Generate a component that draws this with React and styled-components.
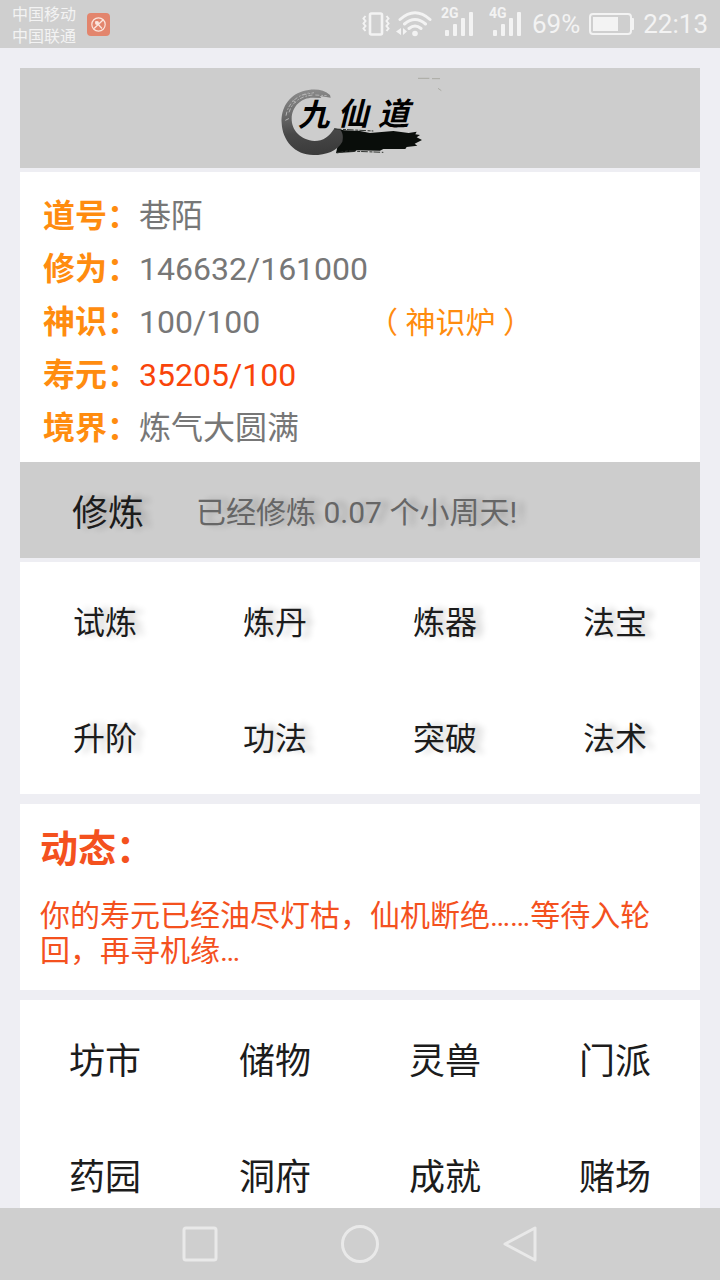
import React from 'react';
import styled, {createGlobalStyle} from 'styled-components';

const perfil = [
    {label: '道号', value: '巷陌'},
    {label: '修为', value: '146632/161000'},
    {label: '神识', value: '100/100', link: '（ 神识炉 ）'},
    {label: '寿元', value: '35205/100', alert: true},
    {label: '境界', value: '炼气大圆满'},
];

const acoes = ['试炼', '炼丹', '炼器', '法宝', '升阶', '功法', '突破', '法术'];
const lugares = ['坊市', '储物', '灵兽', '门派', '药园', '洞府', '成就', '赌场'];

const Signal = ({label}) => (
    <svg width={'34'} height={'32'} viewBox={'0 0 34 32'} fill={'#f3f3f3'}>
        <text x={'0'} y={'14'} fontSize={'14'} fontWeight={'700'}>{label}</text>
        <rect x={'4'} y={'26'} width={'4'} height={'6'} rx={'1'}/>
        <rect x={'12'} y={'20'} width={'4'} height={'12'} rx={'1'}/>
        <rect x={'20'} y={'14'} width={'4'} height={'18'} rx={'1'}/>
        <rect x={'28'} y={'8'} width={'4'} height={'24'} rx={'1'}/>
    </svg>
);

const Vibrate = () => (
    <svg width={'28'} height={'24'} viewBox={'0 0 28 24'} fill={'none'} stroke={'#f3f3f3'}>
        <rect x={'8'} y={'1.500'} width={'12'} height={'21'} rx={'1.500'} strokeWidth={'2.600'}/>
        <path d={'M3.500 4l-2 2.500 2 2.500-2 2.500 2 2.500-2 2.500 2 2.500M24.500 4l2 2.500-2 2.500 2 2.500-2 2.500 2 2.500-2 2.500'} strokeWidth={'2'}/>
    </svg>
);

const Wifi = () => (
    <svg width={'36'} height={'26'} viewBox={'0 0 36 26'} fill={'none'} stroke={'#f3f3f3'} strokeWidth={'3'} strokeLinecap={'round'}>
        <path d={'M4 8.500Q19-5 34 8.500M8.500 13Q19 4 29.500 13M13 17.500Q19 12.500 25 17.500'}/>
        <circle cx={'19'} cy={'22.500'} r={'2.800'} fill={'#f3f3f3'} stroke={'none'}/>
        <path d={'M5 17v7l-5-3.500zM7 17v7l4-3.500z'} fill={'#f3f3f3'} stroke={'none'}/>
    </svg>
);

const Battery = () => (
    <svg width={'45'} height={'22'} viewBox={'0 0 45 22'} fill={'none'}>
        <rect x={'1'} y={'1'} width={'41'} height={'20'} rx={'3'} stroke={'#f3f3f3'} strokeWidth={'2'}/>
        <rect x={'4'} y={'4'} width={'25'} height={'14'} fill={'#f3f3f3'}/>
        <rect x={'42'} y={'5'} width={'3'} height={'12'} rx={'1'} fill={'#f3f3f3'}/>
    </svg>
);

const AppIcon = () => (
    <svg width={'23'} height={'23'} viewBox={'0 0 23 23'} fill={'none'}>
        <rect width={'23'} height={'23'} rx={'4'} fill={'#e3856d'}/>
        <circle cx={'11.500'} cy={'11.500'} r={'6.700'} stroke={'#fbe6de'} strokeWidth={'1.200'}/>
        <path d={'M8.500 8.500l6.500 7M16 7L7 15.500'} stroke={'#fbe6de'} strokeWidth={'1.300'}/>
        <circle cx={'10'} cy={'10'} r={'2'} fill={'#fbe6de'}/>
    </svg>
);

const Logo = () => (
    <svg width={'200'} height={'100'} viewBox={'0 9 600 300'}>
        <defs>
            <linearGradient id={'ink'} x1={'0.4'} y1={'0'} x2={'0.5'} y2={'1'}>
                <stop offset={'0'} stopColor={'#8b8b8b'}/>
                <stop offset={'0.35'} stopColor={'#6b6b6b'}/>
                <stop offset={'0.65'} stopColor={'#484848'}/>
                <stop offset={'1'} stopColor={'#3a3a3a'}/>
            </linearGradient>
        </defs>
        <path d={'M222 190L252 196L300 198L330 204L400 198L446 204L470 200L466 208L480 210L470 217L486 225L464 236L472 242L440 246L436 252L370 252L360 257L290 256L282 261L228 264L236 230Z'} fill={'#090d0a'}/>
        <path d={'M210 90C190 72 160 70 128 79C85 92 62 132 65 174C67 226 104 270 160 270C199 270 232 258 247 230C251 214 248 200 238 192L222 192C208 214 190 228 164 228C122 226 94 196 95 160C96 122 126 97 160 98L184 99L180 93L212 98Z'} fill={'url(#ink)'}/>
        <path d={'M78 152C84 116 108 92 146 84M87 142C96 112 120 94 158 90M76 166l16-8M98 106l14 10M128 90l34-7M166 90l34 2'} fill={'none'} stroke={'#b4b4b4'} strokeWidth={'3'} strokeDasharray={'12 6 5 4'}/>
        <path d={'M224 192L340 198M230 264L262 258L370 262'} fill={'none'} stroke={'#303330'} strokeWidth={'3'} strokeDasharray={'20 5 9 3'}/>
        <path d={'M474 40H508M516 41H540M534 70L544 77'} stroke={'#99998e'} strokeWidth={'2'}/>
        <LogoText>
            <tspan x={'114'} y={'184'}>九</tspan>
            <tspan x={'232'} y={'180'}>仙</tspan>
            <tspan x={'354'} y={'180'}>道</tspan>
        </LogoText>
    </svg>
);

const App = () => (
    <Page>
        <GlobalStyle/>
        <StatusBar>
            <Carriers>
                <div>中国移动</div>
                <div>中国联通</div>
            </Carriers>
            <AppIcon/>
            <StatusRight>
                <Connections>
                    <Vibrate/>
                    <Wifi/>
                </Connections>
                <Signals>
                    <Signal label={'2G'}/>
                    <Signal label={'4G'}/>
                </Signals>
                <span>69%</span>
                <Battery/>
                <span>22:13</span>
            </StatusRight>
        </StatusBar>

        <Content>
            <Banner><Logo/></Banner>

            <Profile>
                {perfil.map(p => (
                    <ProfileRow key={p.label}>
                        <dt>{p.label}：</dt>
                        <ProfileValue $alert={p.alert}>{p.value}</ProfileValue>
                        {p.link && <dd><FurnaceLink href={'#shenshilu'}>{p.link}</FurnaceLink></dd>}
                    </ProfileRow>
                ))}
            </Profile>

            <Training>
                <TrainButton type={'button'}>修炼</TrainButton>
                <TrainStatus>已经修炼 0.07 个小周天!</TrainStatus>
            </Training>

            <Menu>
                {acoes.map(a => <MenuButton key={a} type={'button'} $shadow>{a}</MenuButton>)}
            </Menu>

            <News>
                <NewsTitle>动态：</NewsTitle>
                <NewsText>你的寿元已经油尽灯枯，仙机断绝……等待入轮回，再寻机缘…</NewsText>
            </News>

            <Menu>
                {lugares.map(l => <MenuButton key={l} type={'button'} $large>{l}</MenuButton>)}
            </Menu>
        </Content>

        <NavBar>
            <NavButton type={'button'} aria-label={'最近任务'}>
                <svg width={'40'} height={'40'} viewBox={'0 0 40 40'}><rect x={'4'} y={'4'} width={'32'} height={'32'} rx={'2'}/></svg>
            </NavButton>
            <NavButton type={'button'} aria-label={'主页'}>
                <svg width={'40'} height={'40'} viewBox={'0 0 40 40'}><circle cx={'20'} cy={'20'} r={'17.500'}/></svg>
            </NavButton>
            <NavButton type={'button'} aria-label={'返回'}>
                <svg width={'40'} height={'40'} viewBox={'0 0 40 40'}><path d={'M35 4v32L5 20z'}/></svg>
            </NavButton>
        </NavBar>
    </Page>
);

export default App;


const GlobalStyle = createGlobalStyle`
* {
    box-sizing: border-box;
}
body {
    margin: 0;
    background: #eeeef3;
    font-family: Roboto, "Noto Sans CJK SC", sans-serif;
}
button {
    border: 0;
    padding: 0;
    background: none;
    font-family: inherit;
    cursor: pointer;
}
svg {
    display: block;
    flex: none;
}
`;

const Page = styled.div`
display: flex;
flex-direction: column;
height: 100vh;
`;

const StatusBar = styled.header`
display: flex;
align-items: center;
flex: none;
height: 48px;
padding: 0 12px;
background: #cfcfcf;
color: #f3f3f3;
`;

const Carriers = styled.div`
margin-right: 11px;
padding-top: 4px;
font-size: 16px;
line-height: 22px;
`;

const StatusRight = styled.div`
display: flex;
align-items: center;
gap: 9px;
margin-left: auto;
font-size: 26px;
`;

const Connections = styled.div`
display: flex;
align-items: center;
gap: 6px;
`;

const Signals = styled.div`
display: flex;
gap: 14px;
padding-bottom: 8px;
`;

const Content = styled.main`
flex: 1;
min-height: 0;
overflow: hidden;
padding: 20px 20px 0;
`;

const Banner = styled.div`
display: flex;
justify-content: center;
margin-bottom: 4px;
background: #cdcdcd;
`;

const LogoText = styled.text`
font-size: 94px;
font-weight: 700;
font-style: italic;
fill: #000;
`;

const Profile = styled.dl`
margin: 0;
padding: 18px 23px 7px;
background: #fff;
font-size: 32px;
line-height: 53px;
`;

const ProfileRow = styled.div`
display: flex;

dt {
    color: #ff8c0f;
    font-weight: 700;
}
dd {
    margin: 0;
}
`;

const ProfileValue = styled.dd`
min-width: 229px;
color: ${p => p.$alert ? '#f9440a' : '#777'};
`;

const FurnaceLink = styled.a`
color: #ff8c0f;
font-size: 30px;
text-decoration: none;
`;

const Training = styled.section`
display: flex;
align-items: center;
gap: 52px;
height: 96px;
margin-bottom: 4px;
padding: 0 52px;
background: #cdcdcd;
text-shadow: 8px 0 6px rgba(0, 0, 0, 0.2);
`;

const TrainButton = styled.button`
color: #1c1c1c;
font-size: 36px;
text-shadow: inherit;
`;

const TrainStatus = styled.span`
color: #666;
font-size: 30px;
`;

const Menu = styled.nav`
display: grid;
grid-template-columns: repeat(4, 1fr);
grid-auto-rows: 116px;
background: #fff;
`;

const MenuButton = styled.button`
color: #1c1c1c;
font-size: ${p => p.$large ? '36px' : '32px'};
text-shadow: ${p => p.$shadow ? '8px 0 6px rgba(0, 0, 0, 0.2)' : 'none'};
`;

const News = styled.section`
margin: 10px 0;
padding: 18px 20px 22px;
background: #fff;
color: #f4511e;
`;

const NewsTitle = styled.h2`
margin: 0 0 22px;
font-size: 38px;
line-height: 54px;
`;

const NewsText = styled.p`
margin: 0;
font-size: 30px;
line-height: 35px;
`;

const NavBar = styled.footer`
display: flex;
justify-content: center;
align-items: center;
gap: 120px;
flex: none;
height: 72px;
background: #cfcfcf;
`;

const NavButton = styled.button`
svg {
    fill: none;
    stroke: #e9e9e9;
    stroke-width: 3px;
    stroke-linejoin: round;
}
`;
